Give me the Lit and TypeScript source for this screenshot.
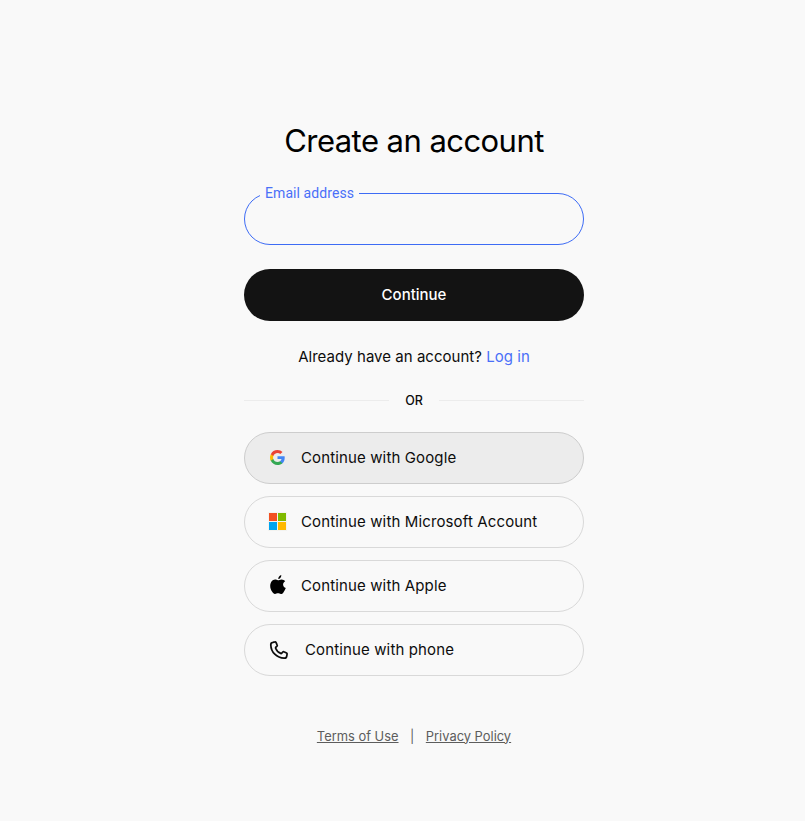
import { LitElement, html, css, svg } from 'lit';
import { customElement } from 'lit/decorators.js';

const googleIcon = svg`
  <path fill="#4285F4" d="M17.64 9.2c0-.64-.06-1.25-.16-1.84H9v3.48h4.84a4.14 4.14 0 0 1-1.8 2.72v2.26h2.92c1.7-1.57 2.68-3.88 2.68-6.62z"/>
  <path fill="#34A853" d="M9 18c2.43 0 4.47-.8 5.96-2.18l-2.92-2.26c-.8.54-1.84.86-3.04.86-2.34 0-4.33-1.58-5.04-3.71H.96v2.33A9 9 0 0 0 9 18z"/>
  <path fill="#FBBC05" d="M3.96 10.71A5.41 5.41 0 0 1 3.68 9c0-.59.1-1.17.28-1.71V4.96H.96A9 9 0 0 0 0 9c0 1.45.35 2.83.96 4.04l3-2.33z"/>
  <path fill="#EA4335" d="M9 3.58c1.32 0 2.51.45 3.44 1.35l2.58-2.59C13.46.89 11.43 0 9 0A9 9 0 0 0 .96 4.96l3 2.33C4.67 5.16 6.66 3.58 9 3.58z"/>
`;

const microsoftIcon = svg`
  <rect x="0" y="0" width="19" height="19" fill="#f3f3f0"/>
  <rect x="1" y="1" width="8" height="8" fill="#F25022"/>
  <rect x="10" y="1" width="8" height="8" fill="#7FBA00"/>
  <rect x="1" y="10" width="8" height="8" fill="#00A4EF"/>
  <rect x="10" y="10" width="8" height="8" fill="#FFB900"/>
`;

const appleIcon = svg`
  <path fill="#000" d="M8 5.2C9 5.2 10 4.400 11.600 4.400C13 4.400 14.400 5.100 15.200 6.300C13.600 7.300 13 8.500 13.100 9.700C13.200 11.100 14.100 12.300 15.800 12.900C15.200 14.600 14.400 16 13.400 17.400C12.700 18.400 11.800 19 10.900 19C9.800 19 9.200 18.300 8 18.300C6.800 18.300 6.100 19 5 19C3.900 19 2.900 18 2 16.600C.8 14.800.2 12.900.2 11C.2 7.300 2.600 4.500 5 4.500C6.200 4.500 7.100 5.200 8 5.200Z"/>
  <path fill="#000" d="M8.200 4.100C8.200 2.300 9.600.5 11.300 0C11.500 1.900 10 3.900 8.200 4.100Z"/>
`;

const phoneIcon = svg`
  <path fill="none" stroke="#0d0d0d" stroke-width="2" stroke-linecap="round" stroke-linejoin="round" d="M5.6 2.6 7.900 2.200c.5-.1 1 .2 1.200.6l1.400 3c.2.4.1.9-.2 1.200L8.900 8.300c-.3.3-.4.7-.2 1.100.9 2.400 3.400 4.900 5.900 5.900.4.2.8.1 1.100-.2l1.300-1.400c.3-.3.8-.4 1.200-.2l3 1.400c.4.2.7.7.6 1.200l-.4 2.300c-.2 1.500-1.500 2.500-3 2.400C10.100 20.600 3.400 13.900 3.200 5.600c-.1-1.500.9-2.800 2.400-3z"/>
`;

@customElement('app-root')
export class AppRoot extends LitElement {
  static styles = css`
    :host {
      display: flex;
      justify-content: center;
      min-height: 821px;
      box-sizing: border-box;
      padding-left: 23px;
      background: #f9f9f9;
      font-family: Inter, "Liberation Sans", sans-serif;
      color: #0d0d0d;
    }

    .card {
      width: 340px;
      display: flex;
      flex-direction: column;
    }

    h1 {
      margin: 120px 0 0;
      font-size: 31px;
      line-height: 41px;
      font-weight: 400;
      text-align: center;
      color: #000;
      letter-spacing: -0.55px;
    }

    .field {
      position: relative;
      height: 52px;
      margin-top: 32px;
      box-sizing: border-box;
      border: 1px solid #3e6cf5;
      border-radius: 26px;
    }

    .field label {
      position: absolute;
      left: 15px;
      top: -9px;
      padding: 0 5px;
      background: #f9f9f9;
      font-family: Roboto, sans-serif;
      font-size: 14px;
      line-height: 17px;
      letter-spacing: 0.08px;
      color: #4a70f8;
    }

    .primary {
      height: 52px;
      box-sizing: border-box;
      padding-bottom: 2px;
      margin-top: 24px;
      border-radius: 26px;
      background: #131313;
      color: #fff;
      font-size: 15px;
      font-weight: 500;
      display: flex;
      align-items: center;
      justify-content: center;
    }

    .login {
      margin: 26px 0 0;
      font-size: 15px;
      line-height: 20px;
      letter-spacing: 0.03px;
      text-align: center;
    }

    .login a {
      color: #4a70f8;
      text-decoration: none;
    }

    .divider {
      display: flex;
      align-items: center;
      gap: 16px;
      margin-top: 23px;
      height: 20px;
      font-size: 12.5px;
      font-weight: 500;
      color: #0d0d0d;
    }

    .divider::before,
    .divider::after {
      content: "";
      flex: 1;
      height: 1px;
      background: #ececec;
    }

    .socials {
      display: flex;
      flex-direction: column;
      gap: 12px;
      margin-top: 22px;
    }

    .social {
      height: 52px;
      box-sizing: border-box;
      display: flex;
      align-items: center;
      gap: 14px;
      padding-left: 23px;
      border: 1px solid #d9d9d9;
      border-radius: 26px;
      font-size: 15px;
      letter-spacing: 0.13px;
    }

    .social span.text {
      padding-bottom: 2px;
    }

    .social.hover {
      background: #ececec;
      border-color: #cdcdcd;
    }

    .icon {
      width: 19px;
      height: 26px;
      flex: none;
      display: flex;
      align-items: center;
      justify-content: center;
    }

    .icon svg {
      flex: none;
      width: 19px;
      height: 19px;
    }

    .google .icon svg {
      width: 15px;
      height: 15px;
      margin-bottom: 2px;
    }

    .microsoft .icon svg {
      margin-bottom: 1px;
    }

    .apple .icon svg {
      width: 16px;
      height: 19px;
      margin-bottom: 3px;
    }

    .phone .icon {
      width: 23px;
    }

    .phone .icon svg {
      width: 21px;
      height: 21px;
      margin-left: -2px;
    }

    footer {
      display: flex;
      justify-content: center;
      align-items: center;
      gap: 11.5px;
      margin-top: 50px;
      height: 20px;
      font-size: 12.9px;
      color: #5d5d5d;
    }

    footer a {
      color: inherit;
      text-decoration: underline;
    }
  `;

  private social(label: string, viewBox: string, icon: unknown, cls: string) {
    return html`
      <div class="social ${cls}">
        <span class="icon"><svg viewBox=${viewBox}>${icon}</svg></span>
        <span class="text">${label}</span>
      </div>
    `;
  }

  render() {
    return html`
      <main class="card">
        <h1>Create an account</h1>
        <div class="field"><label>Email address</label></div>
        <div class="primary">Continue</div>
        <p class="login">Already have an account? <a href="#">Log in</a></p>
        <div class="divider">OR</div>
        <div class="socials">
          ${this.social('Continue with Google', '0 0 18 18', googleIcon, 'google hover')}
          ${this.social('Continue with Microsoft Account', '0 0 19 19', microsoftIcon, 'microsoft')}
          ${this.social('Continue with Apple', '0 0 16 19', appleIcon, 'apple')}
          ${this.social('Continue with phone', '0 0 24 24', phoneIcon, 'phone')}
        </div>
        <footer>
          <a href="#">Terms of Use</a>
          <span>|</span>
          <a href="#">Privacy Policy</a>
        </footer>
      </main>
    `;
  }
}
